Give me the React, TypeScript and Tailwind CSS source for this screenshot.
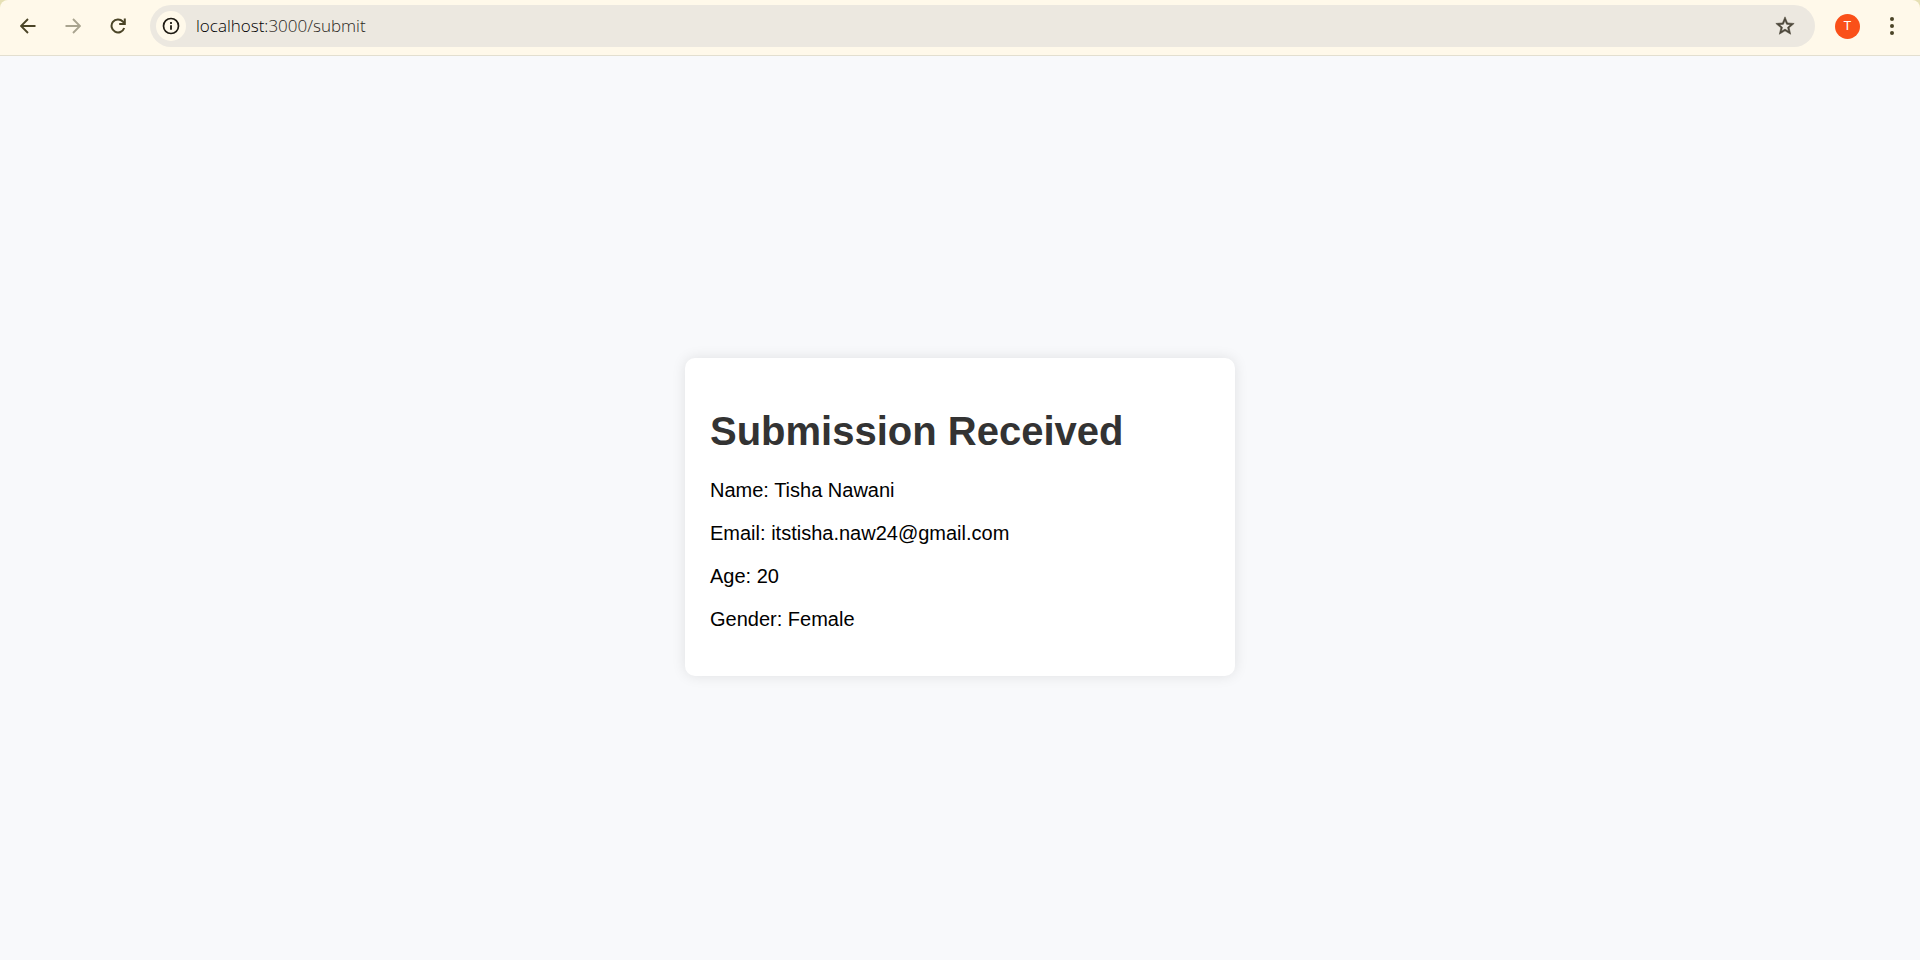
import { MdStarOutline } from "react-icons/md";

const details = [
  ["Name", "Tisha Nawani"],
  ["Email", "itstisha.naw24@gmail.com"],
  ["Age", "20"],
  ["Gender", "Female"],
];

const iconButton = "flex size-[45px] items-center justify-center";

function ArrowIcon({ forward = false }: { forward?: boolean }) {
  return (
    <svg viewBox="0 0 16 16" className="size-4" fill="none" stroke="currentColor" strokeWidth="1.9" aria-hidden="true">
      {forward ? <path d="M0.5 8H14.5M8 1L15 8L8 15" /> : <path d="M15.5 8H1.5M8 1L1 8L8 15" />}
    </svg>
  );
}

function ReloadIcon() {
  return (
    <svg viewBox="0 0 16 16" className="size-4" fill="none" stroke="currentColor" strokeWidth="2" aria-hidden="true">
      <path d="M14.2 10A6.5 6.5 0 1 1 12.8 3.5L14.6 5.4" />
      <path d="M14.8 0.4V6H9.2" />
    </svg>
  );
}

function InfoIcon() {
  return (
    <svg viewBox="0 0 18 18" className="size-[18px]" aria-hidden="true">
      <circle cx="9" cy="9" r="7.5" fill="none" stroke="currentColor" strokeWidth="1.7" />
      <path d="M8.1 8.2h1.8v4.6H8.1zM8.1 5.1h1.8v1.8H8.1z" fill="currentColor" />
    </svg>
  );
}

function Toolbar() {
  return (
    <div className="bg-[#e6e0b4]">
      <header className="flex h-14 items-center rounded-t-lg border-b border-[#e3dfd0] bg-[#fff9ea] pr-[6px] pb-[3px] pl-[5px] text-[#4b4527]">
        <button aria-label="Back" className={iconButton}>
          <ArrowIcon />
        </button>
        <button aria-label="Forward" disabled className={`${iconButton} text-[#a9a48f]`}>
          <ArrowIcon forward />
        </button>
        <button aria-label="Reload" className={iconButton}>
          <ReloadIcon />
        </button>
        <div className="ml-[10px] flex h-[42px] flex-1 items-center rounded-full bg-[#ece8e0] pr-[19px] pl-1.5">
          <button
            aria-label="View site information"
            className="flex size-[30px] items-center justify-center rounded-full bg-[#fff9ea] text-[#1f1b13]"
          >
            <InfoIcon />
          </button>
          <a href="#" className="ml-2.5 flex-1 font-['Open_Sans',sans-serif] text-[17px] font-light text-[#2b271c]">
            <span className="text-black">localhost:</span>3000/submit
          </a>
          <button aria-label="Bookmark this tab" className="text-[#4b4639]">
            <MdStarOutline className="size-[22px] stroke-current [stroke-width:0.6]" />
          </button>
        </div>
        <button
          aria-label="Profile"
          className="ml-5 flex size-[25px] items-center justify-center rounded-full bg-[#fa5019] font-[Roboto,sans-serif] text-[13px] text-white"
        >
          T
        </button>
        <button aria-label="Menu" className="ml-[9px] flex size-[45px] items-center justify-center">
          <svg viewBox="0 0 4 18" className="h-[18px] w-1" fill="currentColor" aria-hidden="true">
            <circle cx="2" cy="2" r="2" />
            <circle cx="2" cy="9" r="2" />
            <circle cx="2" cy="16" r="2" />
          </svg>
        </button>
      </header>
    </div>
  );
}

export default function App() {
  return (
    <div className="flex min-h-screen flex-col bg-[#f8f9fb] font-['Liberation_Sans',Arial,sans-serif]">
      <Toolbar />
      <main className="flex flex-1 items-center justify-center pt-[18px]">
        <section className="w-[550px] rounded-[10px] bg-white px-[25px] pt-[50px] pb-[45px] shadow-[0_0_14px_rgba(0,0,0,0.1)]">
          <h1 className="mb-6 text-[40px] leading-[47px] font-bold text-[#333333]">Submission Received</h1>
          <div className="flex flex-col gap-5 text-xl leading-[23px] text-black">
            {details.map(([label, value]) => (
              <p key={label}>
                {label}: {value}
              </p>
            ))}
          </div>
        </section>
      </main>
    </div>
  );
}
